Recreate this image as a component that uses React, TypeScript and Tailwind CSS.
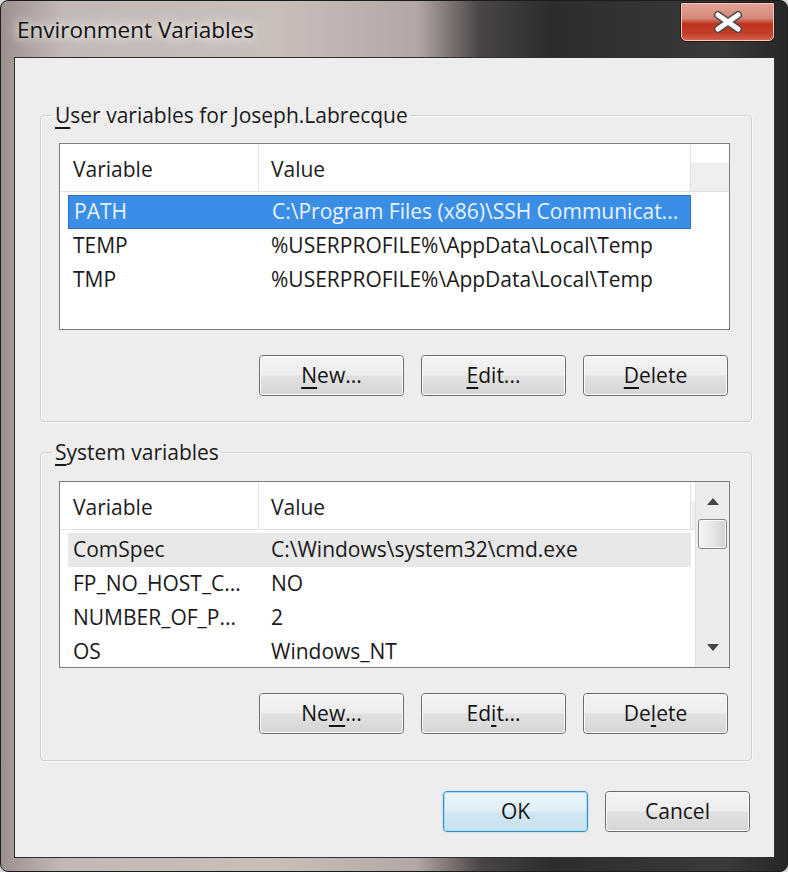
import React from "react";

type Row = [string, string];

function Mn({ c }: { c: string }) {
  return <span className="underline decoration-[1.5px] underline-offset-[4px]">{c}</span>;
}

function Btn({ children, primary = false }: { children: React.ReactNode; primary?: boolean }) {
  if (primary) {
    return (
      <div className="w-[145px] h-[41px] rounded-[4px] border border-[#3c8fc0] shadow-[0_0_2px_rgba(90,180,230,0.6)]">
        <div className="w-full h-full rounded-[3px] border border-[#a6dcf5] bg-[linear-gradient(180deg,#eaf5fb_0%,#e0eff8_48%,#d2e8f4_52%,#c9e2f0_100%)] flex items-center justify-center text-[21px] text-[#141414]">
          {children}
        </div>
      </div>
    );
  }
  return (
    <div className="w-[145px] h-[41px] rounded-[4px] border border-[#6c6c6c]">
      <div className="w-full h-full rounded-[3px] border border-[#fafafa] bg-[linear-gradient(180deg,#f3f3f3_0%,#ededed_48%,#e1e1e1_52%,#d6d6d6_100%)] flex items-center justify-center text-[21px] text-[#141414]">
        {children}
      </div>
    </div>
  );
}

function ScrollBar() {
  return (
    <div className="w-[34px] shrink-0 flex flex-col bg-[#ececec] border-l border-[#e0e0e0]">
      <div className="h-[34px] shrink-0 flex items-center justify-center pt-[4px]">
        <svg width="12" height="7" viewBox="0 0 12 7">
          <path d="M0 7 L6 0 L12 7 Z" fill="#454545" />
        </svg>
      </div>
      <div className="mt-[3px] mx-[2px] h-[30px] shrink-0 rounded-[3px] border border-[#858585] bg-[linear-gradient(90deg,#f6f6f6_0%,#e6e6e6_50%,#d2d2d2_100%)] shadow-[inset_0_0_0_1px_#fbfbfb]" />
      <div className="flex-1" />
      <div className="h-[34px] shrink-0 flex items-center justify-center pb-[6px]">
        <svg width="12" height="7" viewBox="0 0 12 7">
          <path d="M0 0 L12 0 L6 7 Z" fill="#454545" />
        </svg>
      </div>
    </div>
  );
}

function ListView({
  rows,
  selected = -1,
  hover = -1,
  scroll = false,
}: {
  rows: Row[];
  selected?: number;
  hover?: number;
  scroll?: boolean;
}) {
  return (
    <div className="h-[187px] border border-[#7c7c7c] bg-white flex overflow-hidden">
      <div className="flex-1 flex flex-col min-w-0">
        <div className="h-[48px] shrink-0 flex border-b border-[#e2e2e2] text-[21px] text-[#1c1c1c]">
          <div className="w-[199px] shrink-0 border-r border-[#e2e2e2] pl-[13px] pt-[4px] flex items-center">Variable</div>
          <div className="w-[432px] shrink-0 border-r border-[#e2e2e2] pl-[12px] pt-[4px] flex items-center">Value</div>
          <div className="flex-1 bg-[linear-gradient(180deg,#ffffff_0%,#ffffff_40%,#efefef_41%,#efefef_100%)]" />
        </div>
        <div className="pt-[3px] flex flex-col">
          {rows.map((r, i) => {
            const cls =
              i === selected
                ? "bg-[#3b8ee6] border border-[#2b6fbf] text-[#e9f3ff]"
                : i === hover
                ? "bg-[#e8e8e8] text-[#1a1a1a]"
                : "text-[#1a1a1a]";
            return (
              <div key={i} className={`ml-[8px] w-[623px] h-[34px] shrink-0 flex items-center text-[21px] whitespace-nowrap ${cls}`}>
                <div className="w-[191px] shrink-0 pl-[5px] overflow-hidden">{r[0]}</div>
                <div className="flex-1 pl-[12px] overflow-hidden">{r[1]}</div>
              </div>
            );
          })}
        </div>
      </div>
      {scroll && <ScrollBar />}
    </div>
  );
}

export default function App() {
  const userRows: Row[] = [
    ["PATH", "C:\\Program Files (x86)\\SSH Communicat..."],
    ["TEMP", "%USERPROFILE%\\AppData\\Local\\Temp"],
    ["TMP", "%USERPROFILE%\\AppData\\Local\\Temp"],
  ];
  const sysRows: Row[] = [
    ["ComSpec", "C:\\Windows\\system32\\cmd.exe"],
    ["FP_NO_HOST_C...", "NO"],
    ["NUMBER_OF_P...", "2"],
    ["OS", "Windows_NT"],
  ];
  return (
    <div className="w-[788px] h-[872px] bg-[#d8d8d8] font-['Open_Sans','Noto_Sans',sans-serif]">
      <div className="w-[788px] h-[872px] flex flex-col rounded-[8px] border border-[#1c1c1c] overflow-hidden bg-[linear-gradient(90deg,#9d918e_0%,#c2b8b5_8%,#c8beba_35%,#b2a7a4_53%,#4a4545_61%,#2c2c2c_70%,#3a3a3a_92%,#262626_100%)]">
        <div className="h-[56px] shrink-0 flex items-start justify-between">
          <div className="pl-[16px] pt-[14px] text-[22.5px] leading-[30px] text-[#141414] [text-shadow:0_0_10px_#ffffff,0_0_18px_rgba(255,255,255,0.9)]">
            Environment Variables
          </div>
          <div className="mr-[12px] mt-[1px] w-[95px] h-[40px] rounded-b-[6px] rounded-t-[2px] border border-[#2a1512]">
            <div className="w-full h-full rounded-b-[5px] border border-[#f1c7bf] bg-[linear-gradient(180deg,#e0a396_0%,#d48678_40%,#c0321e_55%,#c33c27_80%,#d0624c_100%)] flex items-center justify-center">
              <svg width="30" height="22" viewBox="0 0 30 22">
                <path d="M5 4 L25 18 M25 4 L5 18" stroke="#4b4b4b" strokeWidth="8" strokeLinecap="round" />
                <path d="M5 4 L25 18 M25 4 L5 18" stroke="#ffffff" strokeWidth="5" strokeLinecap="round" />
              </svg>
            </div>
          </div>
        </div>
        <div className="flex-1 ml-[13px] mr-[12px] mb-[13px] border border-[#303030] bg-[#ededed] flex flex-col text-[#1a1a1a]">
          <fieldset className="mt-[43px] ml-[25px] mr-[22px] border border-[#d0d0d0] rounded-[4px] shadow-[inset_1px_1px_0_#fafafa,1px_1px_0_#fafafa] pl-[18px] pr-[21px] pb-[25px]">
            <legend className="-ml-[7px] px-[3px] text-[21px] leading-[28px]">
              <Mn c="U" />ser variables for Joseph.Labrecque
            </legend>
            <div className="mt-[14px]">
              <ListView rows={userRows} selected={0} />
            </div>
            <div className="mt-[25px] pr-[2px] flex justify-end gap-[17px]">
              <Btn><Mn c="N" />ew...</Btn>
              <Btn><Mn c="E" />dit...</Btn>
              <Btn><Mn c="D" />elete</Btn>
            </div>
          </fieldset>
          <fieldset className="mt-[16px] ml-[25px] mr-[22px] border border-[#d0d0d0] rounded-[4px] shadow-[inset_1px_1px_0_#fafafa,1px_1px_0_#fafafa] pl-[18px] pr-[21px] pb-[26px]">
            <legend className="-ml-[7px] px-[3px] text-[21px] leading-[28px]">
              <Mn c="S" />ystem variables
            </legend>
            <div className="mt-[15px]">
              <ListView rows={sysRows} hover={0} scroll />
            </div>
            <div className="mt-[25px] pr-[2px] flex justify-end gap-[17px]">
              <Btn>Ne<Mn c="w" />...</Btn>
              <Btn>Ed<Mn c="i" />t...</Btn>
              <Btn>De<Mn c="l" />ete</Btn>
            </div>
          </fieldset>
          <div className="mt-[30px] mr-[24px] flex justify-end gap-[17px]">
            <Btn primary>OK</Btn>
            <Btn>Cancel</Btn>
          </div>
        </div>
      </div>
    </div>
  );
}
